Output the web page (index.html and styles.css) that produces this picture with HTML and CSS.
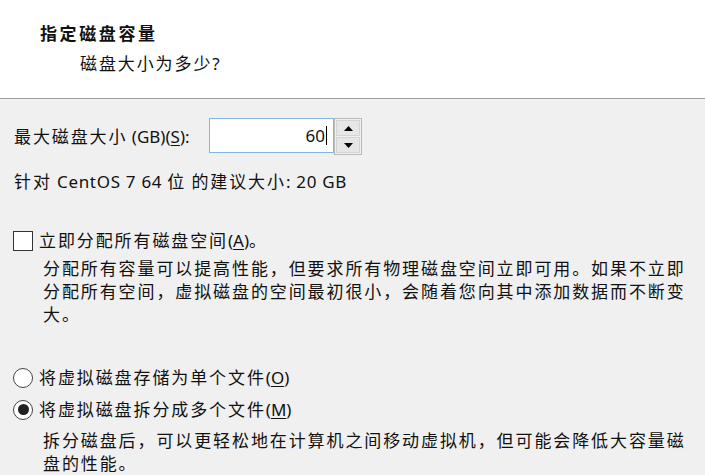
FILE: index.html
```html
<!DOCTYPE html>
<html lang="zh-CN">
<head>
<meta charset="utf-8">
<title>指定磁盘容量</title>
<link rel="stylesheet" href="styles.css">
</head>
<body>
<div class="dialog">
  <header class="head">
    <div class="title">指定磁盘容量</div>
    <div class="subtitle">磁盘大小为多少<span class="lat">?</span></div>
  </header>
  <main class="body">
    <div class="size-row">
      <span class="label">最大磁盘大小<span class="lat"> (GB)(<u>S</u>):</span></span>
      <div class="spin">
        <div class="spin-input"><span class="val">60</span><span class="caret"></span></div>
        <div class="spin-btns">
          <div class="spin-btn"><svg width="9" height="5" viewBox="0 0 9 5"><path d="M0 5 L4.5 0 L9 5 Z" fill="#000"/></svg></div>
          <div class="spin-btn"><svg width="9" height="5" viewBox="0 0 9 5"><path d="M0 0 L4.5 5 L9 0 Z" fill="#000"/></svg></div>
        </div>
      </div>
    </div>
    <div class="hint">针对<span class="lat wide"> CentOS 7 64 </span>位<span class="lat wide"> </span>的建议大小<span class="lat wide">: 20 GB</span></div>

    <div class="opt opt-check">
      <span class="checkbox"></span>
      <span class="opt-text">立即分配所有磁盘空间<span class="lat">(<u>A</u>)</span>。</span>
    </div>
    <div class="desc">分配所有容量可以提高性能，但要求所有物理磁盘空间立即可用。如果不立即<br>分配所有空间，虚拟磁盘的空间最初很小，会随着您向其中添加数据而不断变<br>大。</div>

    <div class="opt opt-radio1">
      <span class="radio"></span>
      <span class="opt-text">将虚拟磁盘存储为单个文件<span class="lat">(<u>O</u>)</span></span>
    </div>
    <div class="opt opt-radio2">
      <span class="radio checked"></span>
      <span class="opt-text">将虚拟磁盘拆分成多个文件<span class="lat">(<u>M</u>)</span></span>
    </div>
    <div class="desc desc2">拆分磁盘后，可以更轻松地在计算机之间移动虚拟机，但可能会降低大容量磁<br>盘的性能。</div>
  </main>
</div>
</body>
</html>
```
FILE: styles.css
```css
* { box-sizing: border-box; }
html, body { margin: 0; padding: 0; }
body {
  width: 705px;
  height: 475px;
  overflow: hidden;
  background: #f0f0f0;
  font-family: "Noto Sans", "Noto Sans CJK SC", sans-serif;
  font-size: 17px;
  letter-spacing: 1.9px;
  color: #111;
  line-height: 23px;
}
.lat { letter-spacing: 0; }
.lat.wide { letter-spacing: 0.7px; }
u { text-decoration: underline; text-underline-offset: 2px; }
.dialog { display: flex; flex-direction: column; height: 475px; }
.head {
  height: 101px;
  background: #fff;
  border-bottom: 1px solid #a0a0a0;
  padding: 22px 0 0 40px;
}
.title { font-weight: bold; letter-spacing: 2.6px; }
.subtitle { margin-top: 7px; padding-left: 40px; }
.body { padding: 19px 0 0 14px; white-space: nowrap; }
.size-row { display: flex; align-items: center; height: 37px; }
.label { width: 195px; }
.spin { display: flex; align-items: flex-start; height: 37px; }
.spin-input {
  width: 125px;
  height: 35px;
  background: #fff;
  border: 1px solid #86b5e3;
  display: flex;
  align-items: center;
  justify-content: flex-end;
  padding-right: 6px;
  letter-spacing: 0;
}
.val { font-family: "Noto Sans", sans-serif; font-size: 17px; }
.caret { width: 1px; height: 19px; background: #000; margin-left: 1px; }
.spin-btns {
  width: 28px;
  height: 37px;
  border: 1px solid #b9b9b9;
  background: #f0f0f0;
  display: flex;
  flex-direction: column;
  padding: 1px;
  gap: 1px;
}
.spin-btn {
  flex: 1;
  background: #e6e6e6;
  border: 1px solid #d4d4d4;
  display: flex;
  align-items: center;
  justify-content: center;
}
.hint { margin-top: 15px; }
.opt { display: flex; align-items: center; height: 23px; }
.opt-check { margin-top: 36px; }
.opt-text { margin-left: 6px; }
.checkbox {
  width: 20px; height: 20px;
  margin-left: -1px;
  background: #fff;
  border: 1px solid #333;
  flex: none;
}
.radio {
  width: 20px; height: 20px;
  margin-left: -1px;
  border-radius: 50%;
  background: #fff;
  border: 1px solid #444;
  flex: none;
  display: flex;
  align-items: center;
  justify-content: center;
}
.radio.checked::after {
  content: "";
  width: 11px; height: 11px;
  border-radius: 50%;
  background: #222;
}
.desc { margin-top: 5px; padding-left: 29px; }
.opt-radio1 { margin-top: 40px; }
.opt-radio2 { margin-top: 9px; }
.desc2 { margin-top: 8px; }
```
